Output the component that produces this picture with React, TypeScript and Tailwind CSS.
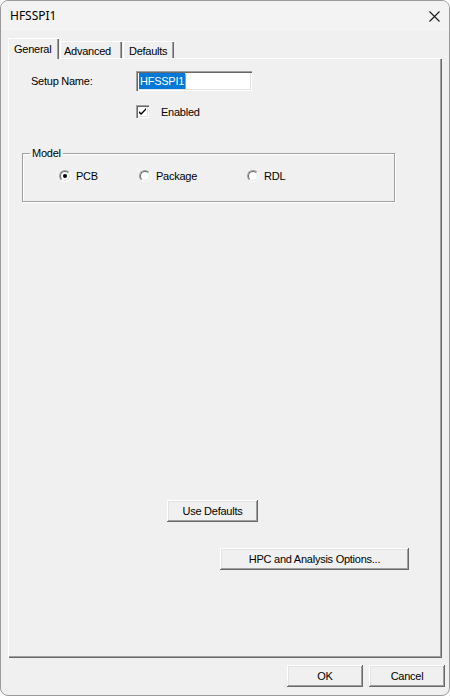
import React from "react";

const font = { fontFamily: '"Liberation Sans", Arial, sans-serif' };

function Btn({ label, className }: { label: string; className: string }) {
  return (
    <div
      className={`flex items-center justify-center bg-[#f0f0f0] text-[11px] text-black shadow-[inset_-1px_-1px_0_#696969,inset_1px_1px_0_#ffffff,inset_-2px_-2px_0_#a0a0a0,inset_2px_2px_0_#e3e3e3] ${className}`}
    >
      {label}
    </div>
  );
}

function Radio({ label, checked, width }: { label: string; checked?: boolean; width: string }) {
  return (
    <div className={`flex items-center ${width}`}>
      <span className="flex h-[12px] w-[12px] items-center justify-center rounded-full border border-t-[#a0a0a0] border-l-[#a0a0a0] border-b-white border-r-white">
        <span className="flex h-[10px] w-[10px] items-center justify-center rounded-full border border-t-[#696969] border-l-[#696969] border-b-[#e3e3e3] border-r-[#e3e3e3] bg-white">
          {checked && <span className="h-[4px] w-[4px] rounded-full bg-black" />}
        </span>
      </span>
      <span className="ml-[5px] text-[11px] text-black">{label}</span>
    </div>
  );
}

export default function App() {
  return (
    <div
      className="flex h-[696px] w-[450px] flex-col overflow-hidden rounded-[8px] border border-[#9a9a9a] bg-[#f0f0f0] tracking-[-0.25px]"
      style={font}
    >
      {/* title bar */}
      <div className="flex h-[30px] shrink-0 items-center justify-between bg-[#f3f3f3] pl-[9px] pr-[9px]">
        <span className="text-[12px] tracking-normal text-black" style={{ fontFamily: '"Noto Sans", "Open Sans", sans-serif' }}>
          HFSSPI1
        </span>
        <svg width="11" height="11" viewBox="0 0 11 11">
          <path d="M0.5 0.5 L10.5 10.5 M10.5 0.5 L0.5 10.5" stroke="#1a1a1a" strokeWidth="1.1" />
        </svg>
      </div>

      {/* tabs */}
      <div className="ml-[7px] mt-[7px] flex h-[20px] items-end text-[11px] text-black">
        <div className="relative z-10 -mb-px flex h-[21px] w-[51px] items-start bg-[#f0f0f0] pl-[6px] pt-[3px] shadow-[inset_1px_1px_0_#ffffff,inset_-1px_0_0_#696969,inset_-2px_0_0_#a0a0a0]">
          General
        </div>
        <div className="ml-px flex h-[17px] w-[62px] items-start pl-[4px] pt-[2px] shadow-[inset_1px_1px_0_#ffffff,inset_-1px_0_0_#696969,inset_-2px_0_0_#a0a0a0]">
          Advanced
        </div>
        <div className="ml-px flex h-[17px] w-[51px] items-start pl-[6px] pt-[2px] shadow-[inset_1px_1px_0_#ffffff,inset_-1px_0_0_#696969,inset_-2px_0_0_#a0a0a0]">
          Defaults
        </div>
      </div>

      {/* panel */}
      <div className="ml-[7px] flex h-[600px] w-[434px] flex-col shadow-[inset_1px_1px_0_#ffffff,inset_-1px_-1px_0_#696969,inset_-2px_-2px_0_#a0a0a0] text-[11px] text-black">
        <div className="mt-[13px] flex h-[20px] items-center">
          <span className="ml-[23px] w-[105px]">Setup Name:</span>
          <div className="flex h-[20px] w-[116px] items-center bg-white pl-[3px] shadow-[inset_1px_1px_0_#a0a0a0,inset_2px_2px_0_#696969,inset_-1px_-1px_0_#ffffff,inset_-2px_-2px_0_#e3e3e3]">
            <span className="bg-[#0078d7] px-px text-white leading-[16px]">HFSSPI1</span>
            <span className="h-[15px] w-px bg-[#ff8728]" />
          </div>
        </div>

        <div className="ml-[128px] mt-[14px] flex h-[13px] items-center">
          <span className="flex h-[13px] w-[13px] items-center justify-center bg-white shadow-[inset_1px_1px_0_#a0a0a0,inset_2px_2px_0_#696969,inset_-1px_-1px_0_#ffffff,inset_-2px_-2px_0_#e3e3e3]">
            <svg width="7" height="7" viewBox="0 0 7 7">
              <path d="M0 3 L0 5 L2 7 L7 2 L7 0 L2 5 Z" fill="#000" />
            </svg>
          </span>
          <span className="ml-[12px] pt-[2px]">Enabled</span>
        </div>

        <fieldset className="ml-[14px] mt-[29px] h-[55px] w-[373px] border border-[#a0a0a0] px-0 shadow-[inset_1px_1px_0_#ffffff,1px_1px_0_#ffffff]">
          <legend className="ml-[7px] px-[2px] text-[11px] leading-[13px]">Model</legend>
          <div className="ml-[36px] mt-[8px] flex items-center">
            <Radio label="PCB" checked width="w-[80px]" />
            <Radio label="Package" width="w-[108px]" />
            <Radio label="RDL" width="w-[80px]" />
          </div>
        </fieldset>

        <div className="flex-1" />

        <Btn label="Use Defaults" className="ml-[159px] h-[22px] w-[91px]" />
        <Btn label="HPC and Analysis Options..." className="ml-[212px] mt-[26px] h-[22px] w-[189px]" />
        <div className="h-[88px]" />
      </div>

      {/* bottom buttons */}
      <div className="mt-[7px] flex gap-[6px] pl-[286px]">
        <Btn label="OK" className="h-[22px] w-[76px]" />
        <Btn label="Cancel" className="h-[22px] w-[76px]" />
      </div>
    </div>
  );
}
